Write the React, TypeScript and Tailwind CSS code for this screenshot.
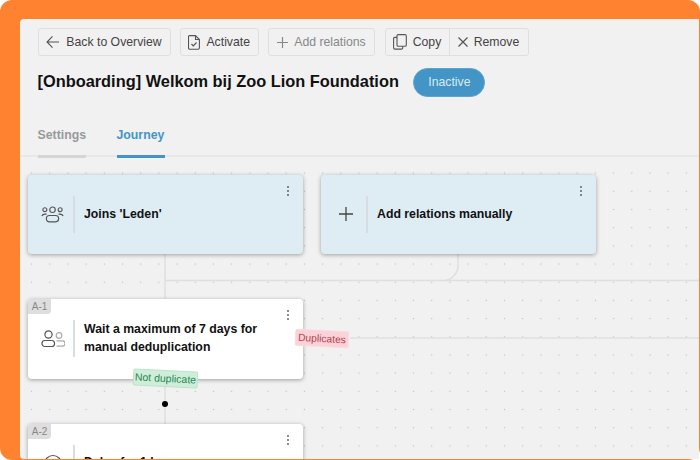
import React from "react";

const Kebab = () => (
  <svg width="4" height="12" viewBox="0 0 4 12" className="absolute top-[10px] right-[13px]" fill="#555">
    <circle cx="2" cy="2" r="0.9" /><circle cx="2" cy="6" r="0.9" /><circle cx="2" cy="10" r="0.9" />
  </svg>
);

const Group = () => (
  <svg width="23" height="17" viewBox="0 0 24 18" fill="none" stroke="#555" strokeWidth="1.2">
    <circle cx="12" cy="4" r="2.9" />
    <circle cx="3.9" cy="3.9" r="2.1" />
    <circle cx="20.1" cy="3.9" r="2.1" />
    <path d="M0.7 10.6c.5-1.3 2-2 3.4-2h1.6M23.3 10.6c-.5-1.3-2-2-3.4-2h-1.6" />
    <rect x="5.5" y="10" width="13" height="6.8" rx="3.2" />
  </svg>
);

const Persons = () => (
  <svg width="24" height="18" viewBox="0 0 24 18" fill="none" strokeWidth="1.2">
    <circle cx="7.5" cy="4.5" r="3.6" stroke="#555" />
    <rect x="1" y="10.5" width="12.5" height="6" rx="2.8" stroke="#555" />
    <circle cx="18" cy="5.5" r="2.8" stroke="#aaa" />
    <path d="M15.5 10.8h5.8a2.6 2.6 0 0 1 0 5.4h-5.8" stroke="#aaa" />
  </svg>
);

function Node({ top, left, tint, tag, icon, children }: { top: number; left: number; tint?: boolean; tag?: string; icon: React.ReactNode; children: React.ReactNode }) {
  return (
    <div
      className={`absolute w-[275px] h-[79.5px] rounded-[4px] shadow-[0_1px_4px_rgba(0,0,0,0.35)] flex items-center ${tint ? "bg-[#deecf4]" : "bg-white"}`}
      style={{ top, left }}
    >
      {tag && (
        <div className="absolute top-0 left-0 w-[23px] h-[15px] bg-[#dedede] rounded-tl-[4px] rounded-br-[4px] flex items-center justify-center text-[10px] text-[#888]">
          {tag}
        </div>
      )}
      <Kebab />
      <div className="w-[45px] shrink-0 flex justify-center pl-[4px]">{icon}</div>
      <div className="w-[2px] h-[37px] bg-[#d5dde2] shrink-0" />
      <div className="pl-[9px] pr-[20px] text-[12.3px] leading-[17.5px] font-bold text-[#111]">{children}</div>
    </div>
  );
}

export default function App() {
  return (
    <div className="w-[700px] h-[460px] bg-white overflow-hidden font-['Liberation_Sans',Arial,sans-serif]">
      <div className="w-full h-full bg-[#ff8230] rounded-[12px] pl-[19.5px] pt-[19px] pr-[1.5px] pb-[1.5px]">
        <div className="w-full h-full bg-[#f1f1f1] rounded-tl-[4px] rounded-bl-[4px] overflow-hidden flex flex-col">
          <div className="shrink-0 h-[138px] border-b-2 border-[#e8e8e8] px-[18px] pt-[9px] text-[#444]">
            <div className="flex gap-[9.5px] text-[12.25px]">
              <button className="h-[28px] w-[133px] border border-[#dfdfdf] rounded-[3px] flex items-center justify-center gap-[6px]">
                <svg width="14" height="14" viewBox="0 0 14 14" fill="none" stroke="#555" strokeWidth="1.1"><path d="M13 7H1M6.5 1.3 1 7l5.5 5.7" /></svg>
                Back to Overview
              </button>
              <button className="h-[28px] w-[78.5px] border border-[#dfdfdf] rounded-[3px] flex items-center justify-center gap-[6px]">
                <svg width="12" height="15" viewBox="0 0 12 15" fill="none" stroke="#555" strokeWidth="1.1"><path d="M1.8.6h5.7L11.4 4.5v8.2a1.6 1.6 0 0 1-1.6 1.6H1.8a1.3 1.3 0 0 1-1.3-1.3V1.9A1.3 1.3 0 0 1 1.8.6ZM7.5.6v3.9h3.9M3.5 9l1.8 1.9 3.2-3.4" /></svg>
                Activate
              </button>
              <button className="h-[28px] w-[107px] border border-[#dfdfdf] rounded-[3px] flex items-center justify-center gap-[6px] text-[#888]">
                <svg width="11" height="11" viewBox="0 0 11 11" fill="none" stroke="#888" strokeWidth="1.2"><path d="M5.5 0v11M0 5.5h11" /></svg>
                Add relations
              </button>
              <div className="h-[28px] w-[144px] border border-[#dfdfdf] rounded-[3px] flex">
                <button className="w-[64px] border-r border-[#dfdfdf] flex items-center justify-center gap-[6px]">
                  <svg width="14" height="16" viewBox="0 0 14 16" fill="none" stroke="#555" strokeWidth="1.1"><path d="M4 1.7A1.2 1.2 0 0 1 5.2.6H12a1.3 1.3 0 0 1 1.3 1.3v9a1.3 1.3 0 0 1-1.3 1.3H5.2A1.2 1.2 0 0 1 4 11V1.7Z" /><path d="M4 3.4H1.8A1.2 1.2 0 0 0 .6 4.6v9.2a1.3 1.3 0 0 0 1.3 1.3h6.6A1.2 1.2 0 0 0 9.7 14v-1.8" /></svg>
                  Copy
                </button>
                <button className="flex-1 flex items-center justify-center gap-[6px]">
                  <svg width="10" height="10" viewBox="0 0 10 10" fill="none" stroke="#555" strokeWidth="1.2"><path d="m.5.5 9 9M9.5.5l-9 9" /></svg>
                  Remove
                </button>
              </div>
            </div>
            <div className="flex items-center mt-[11px] h-[30px]">
              <h1 className="text-[16.36px] font-bold text-[#111] leading-none whitespace-nowrap mb-[2px]">[Onboarding] Welkom bij Zoo Lion Foundation</h1>
              <span className="ml-[14.5px] w-[72px] h-[29px] rounded-full bg-[#4295c5] border border-[#5ba5d0] text-[#dbeaf3] text-[12.25px] flex items-center justify-center">Inactive</span>
            </div>
            <div className="flex gap-[30.5px] mt-[23px] text-[12.3px] font-bold">
              <div className="w-[48.5px] h-[37.5px] border-b-[3px] border-[#d5d5d5] text-[#999] leading-[30px]">Settings</div>
              <div className="w-[48.5px] h-[37.5px] border-b-[3px] border-[#4295c5] text-[#4295c5] leading-[30px]">Journey</div>
            </div>
          </div>
          <div className="relative flex-1 bg-[radial-gradient(circle,#c0c0c0_0.7px,transparent_1px)] bg-[length:18.2px_18.2px] bg-[position:2.5px_7px]">
            <svg className="absolute inset-0 w-full h-full" fill="none" stroke="#dfdfdf" strokeWidth="1.5">
              <path d="M145 97V142M145 123.5H680M438 97v11a15 15 0 0 1-15 15.5M145 221V267M330 181H680" />
              <circle cx="145" cy="247" r="3" fill="#000" stroke="none" />
            </svg>
            <Node top={17.5} left={8.5} tint icon={<Group />}>Joins 'Leden'</Node>
            <Node top={17.5} left={301.5} tint icon={<svg width="14" height="14" viewBox="0 0 14 14" fill="none" stroke="#444" strokeWidth="1.3"><path d="M7 0v14M0 7h14" /></svg>}>Add relations manually</Node>
            <Node top={142} left={8.5} tag="A-1" icon={<Persons />}>Wait a maximum of 7 days for manual deduplication</Node>
            <Node top={267} left={8.5} tag="A-2" icon={<svg width="20" height="20" viewBox="0 0 20 20" fill="none" stroke="#555" strokeWidth="1.2"><circle cx="10" cy="10" r="8.5" /><path d="M10 5v5l3 2" /></svg>}><div className="-mt-[2px]">Delay for 1 hour</div></Node>
            <div className="absolute left-[275.5px] top-[173px] w-[54px] h-[17px] bg-[#fbd2d8] border border-[#f8dce0] rounded-[2px] rotate-[3deg] text-[10.25px] text-[#b13f52] flex items-center justify-center">Duplicates</div>
            <div className="absolute left-[113.5px] top-[212.5px] w-[65px] h-[17px] bg-[#cfeeda] border border-[#b9e4c8] rounded-[2px] rotate-[3deg] text-[10.5px] text-[#2c8553] flex items-center justify-center">Not duplicate</div>
          </div>
        </div>
      </div>
    </div>
  );
}
